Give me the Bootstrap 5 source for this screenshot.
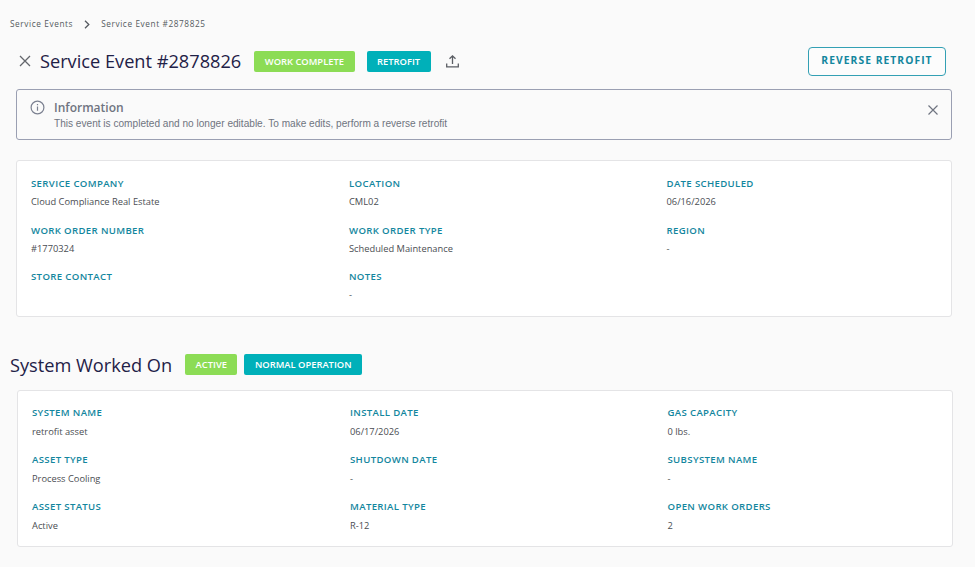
<!doctype html>
<html lang="en">

<head>
    <meta charset="utf-8">
    <meta name="viewport" content="width=device-width, initial-scale=1">
    <title>Service Event</title>
    <link href="https://cdn.jsdelivr.net/npm/bootstrap@5.3.0/dist/css/bootstrap.min.css" rel="stylesheet">
    <style>
        body {
            background-color: #fafafa;
            font-family: "Open Sans", sans-serif;
            color: #3f4248;
            overflow: hidden;
        }

        .page-wrap {
            padding: 17px 23px 0 10px;
        }

        .crumbs {
            font-size: 8.25px;
            letter-spacing: 0.6px;
            line-height: 14px;
            color: #555a60;
            gap: 11px;
        }

        .title-row {
            margin: 10px 0 0 8px;
            height: 40px;
        }

        .close-x {
            width: 14px;
            height: 14px;
            margin-right: 8px;
            flex: none;
        }

        .event-title {
            font-size: 18.2px;
            font-weight: 400;
            line-height: 28px;
            color: #1f2147;
            margin: 0 13px 0 0;
        }

        .state-tag {
            font-size: 9.4px;
            font-weight: 600;
            color: #fff;
            height: 21px;
            line-height: 21px;
            padding: 0 10.5px;
            border-radius: 2px;
            white-space: nowrap;
        }

        .tag-green {
            background-color: #8cdc55;
        }

        .tag-teal {
            background-color: #00b0b9;
        }

        .title-row .tag-green {
            margin-right: 12px;
        }

        .system-row .tag-green {
            margin-right: 7px;
        }

        .upload-icon {
            margin-left: 14px;
        }

        .reverse-btn {
            width: 138px;
            height: 29px;
            padding: 0;
            font-size: 10.3px;
            font-weight: 700;
            letter-spacing: 1.05px;
            color: #13869e;
            background: #fcfcfc;
            border: 1px solid #33a0b4;
            border-radius: 4px;
            margin: 0 6px 0 auto;
        }

        .info-box {
            margin: 8px 0 0 6px;
            height: 51px;
            background: #fafafa;
            border: 1px solid #9a9fb2;
            border-radius: 3px;
            padding: 10px 12px 0 13px;
        }

        .info-icon {
            margin-right: 9px;
        }

        .info-title {
            font-size: 12px;
            font-weight: 600;
            line-height: 16px;
            color: #6f7480;
        }

        .info-text {
            font-family: "Liberation Sans", sans-serif;
            font-size: 10.1px;
            line-height: 14px;
            color: #6f7480;
            margin-top: 1px;
        }

        .detail-card {
            background: #fff;
            border: 1px solid #e4e4e6;
            border-radius: 3px;
            height: 157px;
            padding: 16px 14px 0;
            display: grid;
            grid-template-columns: 318px 317.5px 1fr;
            grid-auto-rows: 46.5px;
        }

        .first-card {
            margin: 20px 0 0 6px;
        }

        .second-card {
            margin: 11px -1px 0 7px;
            padding-top: 15px;
            grid-auto-rows: 47px;
        }

        .field-label {
            font-size: 9.6px;
            font-weight: 600;
            letter-spacing: 0.35px;
            line-height: 14px;
            color: #13869e;
        }

        .field-value {
            font-size: 9.3px;
            line-height: 14px;
            color: #4a4d52;
            margin-top: 4px;
        }

        .second-card .field-value {
            margin-top: 5px;
        }

        .system-row {
            margin-top: 33px;
            height: 29px;
        }

        .system-title {
            font-size: 18.2px;
            font-weight: 400;
            line-height: 28px;
            color: #1f2147;
            margin: 0 13px 0 0;
        }
    </style>
</head>

<body>
    <div class="page-wrap">
        <div class="crumbs d-flex align-items-center">
            <span>Service Events</span>
            <svg width="6" height="9" viewBox="0 0 6 9" fill="none" stroke="#555a60" stroke-width="1.3"><path d="M1 .8 4.8 4.5 1 8.2"/></svg>
            <span>Service Event #2878825</span>
        </div>

        <div class="title-row d-flex align-items-center">
            <svg class="close-x" viewBox="0 0 14 14" fill="none" stroke="#63666c" stroke-width="1.3"><path d="M2 2l10 10M12 2 2 12"/></svg>
            <h1 class="event-title">Service Event #2878826</h1>
            <span class="state-tag tag-green">WORK COMPLETE</span>
            <span class="state-tag tag-teal">RETROFIT</span>
            <svg class="upload-icon" width="15" height="15" viewBox="0 0 15 15" fill="none" stroke="#5b5e64" stroke-width="1.3"><path d="M7.5 10V2M4.5 4.8 7.5 1.8l3 3M1.7 9.5v3.3h11.6V9.5"/></svg>
            <button type="button" class="btn reverse-btn">REVERSE RETROFIT</button>
        </div>

        <div class="info-box d-flex align-items-start">
            <svg class="info-icon flex-shrink-0" width="15" height="15" viewBox="0 0 15 15" fill="none" stroke="#7b8090" stroke-width="1.2"><circle cx="7.5" cy="7.5" r="6.4"/><path d="M7.5 6.6v4.2M7.5 4v1.3"/></svg>
            <div class="flex-grow-1">
                <div class="info-title">Information</div>
                <div class="info-text">This event is completed and no longer editable. To make edits, perform a reverse retrofit</div>
            </div>
            <svg class="flex-shrink-0 mt-1" width="12" height="12" viewBox="0 0 12 12" fill="none" stroke="#6f7480" stroke-width="1.2"><path d="M1.5 1.5l9 9M10.5 1.5l-9 9"/></svg>
        </div>

        <div class="detail-card first-card">
            <div><div class="field-label">SERVICE COMPANY</div><div class="field-value">Cloud Compliance Real Estate</div></div>
            <div><div class="field-label">LOCATION</div><div class="field-value">CML02</div></div>
            <div><div class="field-label">DATE SCHEDULED</div><div class="field-value">06/16/2026</div></div>
            <div><div class="field-label">WORK ORDER NUMBER</div><div class="field-value">#1770324</div></div>
            <div><div class="field-label">WORK ORDER TYPE</div><div class="field-value">Scheduled Maintenance</div></div>
            <div><div class="field-label">REGION</div><div class="field-value">-</div></div>
            <div><div class="field-label">STORE CONTACT</div></div>
            <div><div class="field-label">NOTES</div><div class="field-value">-</div></div>
        </div>

        <div class="system-row d-flex align-items-center">
            <h2 class="system-title">System Worked On</h2>
            <span class="state-tag tag-green">ACTIVE</span>
            <span class="state-tag tag-teal">NORMAL OPERATION</span>
        </div>

        <div class="detail-card second-card">
            <div><div class="field-label">SYSTEM NAME</div><div class="field-value">retrofit asset</div></div>
            <div><div class="field-label">INSTALL DATE</div><div class="field-value">06/17/2026</div></div>
            <div><div class="field-label">GAS CAPACITY</div><div class="field-value">0 lbs.</div></div>
            <div><div class="field-label">ASSET TYPE</div><div class="field-value">Process Cooling</div></div>
            <div><div class="field-label">SHUTDOWN DATE</div><div class="field-value">-</div></div>
            <div><div class="field-label">SUBSYSTEM NAME</div><div class="field-value">-</div></div>
            <div><div class="field-label">ASSET STATUS</div><div class="field-value">Active</div></div>
            <div><div class="field-label">MATERIAL TYPE</div><div class="field-value">R-12</div></div>
            <div><div class="field-label">OPEN WORK ORDERS</div><div class="field-value">2</div></div>
        </div>
    </div>

    <script src="https://cdn.jsdelivr.net/npm/bootstrap@5.3.0/dist/js/bootstrap.bundle.min.js"></script>
</body>

</html>
